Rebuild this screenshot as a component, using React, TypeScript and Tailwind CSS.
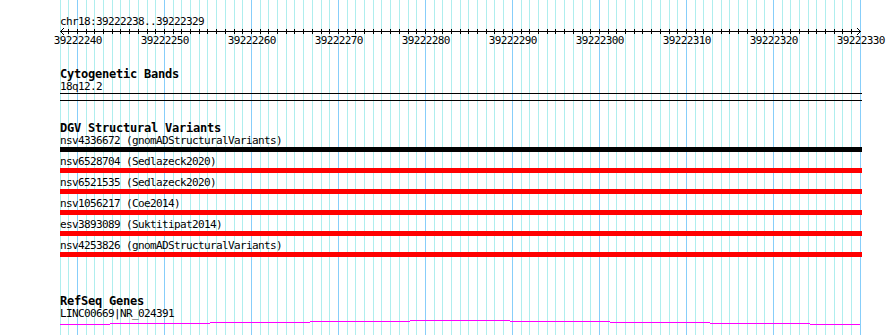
import React from 'react';

const START = 39222238;
const BP = 8.7;
const LEFT = 60;
const COUNT = 92;

const mono = "font-['DejaVu_Sans_Mono',monospace]";

const variants = [
    { name: 'nsv4336672 (gnomADStructuralVariants)', color: 'bg-black' },
    { name: 'nsv6528704 (Sedlazeck2020)', color: 'bg-[#ff0000]' },
    { name: 'nsv6521535 (Sedlazeck2020)', color: 'bg-[#ff0000]' },
    { name: 'nsv1056217 (Coe2014)', color: 'bg-[#ff0000]' },
    { name: 'esv3893089 (Suktitipat2014)', color: 'bg-[#ff0000]' },
    { name: 'nsv4253826 (gnomADStructuralVariants)', color: 'bg-[#ff0000]' },
];

const ticks = Array.from({ length: COUNT + 1 }, (_, k) => ({
    k,
    x: Math.floor(LEFT + k * BP) + 0.5,
    major: (START + k) % 10 === 0,
}));

const GridLines: React.FC = () => (
    <svg className="absolute inset-0" width={890} height={335}>
        {ticks.map(t => (
            <line key={t.k} x1={t.x} x2={t.x} y1={0} y2={335} stroke={t.major ? '#87cefa' : '#afeeee'} strokeWidth={1} />
        ))}
    </svg>
);

const Ruler: React.FC = () => (
    <svg width={890} height={18} className="block">
        <line x1={60} x2={861} y1={3.5} y2={3.5} stroke="#000" strokeWidth={1} />
        <path d="M64 0 L60.5 3.5 L64 7" fill="none" stroke="#000" strokeWidth={1} />
        <path d="M857 0 L860.5 3.5 L857 7" fill="none" stroke="#000" strokeWidth={1} />
        {ticks.filter(t => t.k > 0 && t.k < COUNT).map(t => (
            <line key={t.k} x1={t.x} x2={t.x} y1={1} y2={6} stroke="#000" strokeWidth={1} />
        ))}
        {ticks.filter(t => t.major).map(t => (
            <text
                key={t.k}
                x={LEFT + t.k * BP + 0.3}
                y={16}
                textAnchor="middle"
                fontFamily="'DejaVu Sans Mono', monospace"
                fontSize={11}
                letterSpacing={-0.62}
                fill="#000"
            >
                {START + t.k}
            </text>
        ))}
    </svg>
);

// gene model line steps up and back down in 100px pieces
const geneSegments = [
    [60, 110, 4], [110, 210, 3], [210, 310, 2], [310, 410, 1], [410, 510, 0],
    [510, 610, 1], [610, 710, 2], [710, 810, 3], [810, 860, 4],
];

const GeneLine: React.FC = () => (
    <svg width={890} height={6} className="block">
        {geneSegments.map(([a, b, y], i) => (
            <line key={i} x1={a} x2={b} y1={y + 0.5} y2={y + 0.5} stroke="#ff00ff" strokeWidth={1} />
        ))}
    </svg>
);

const App: React.FC = () => {
    return (
        <div className="relative w-[890px] h-[335px] overflow-hidden bg-white text-black">
            <GridLines />
            <div className="relative flex flex-col">
                <div className={`${mono} ml-[60px] mt-[16px] text-[11px] leading-[12px] tracking-[-0.62px]`}>
                    chr18:39222238..39222329
                </div>
                <Ruler />

                {/* Cytogenetic Bands */}
                <div className={`${mono} ml-[60px] mt-[23px] text-[12px] font-bold leading-[11px] tracking-[-0.22px]`}>
                    Cytogenetic Bands
                </div>
                <div className={`${mono} ml-[60px] text-[11px] leading-[13px] tracking-[-0.62px]`}>
                    18q12.2
                </div>
                <div className="ml-[60px] w-[802px] h-[8px] border-y border-black" />

                {/* DGV Structural Variants */}
                <div className={`${mono} ml-[60px] mt-[21px] text-[12px] font-bold leading-[12px] tracking-[-0.22px]`}>
                    DGV Structural Variants
                </div>
                <div className="flex flex-col gap-[3px]">
                    {variants.map(v => (
                        <div key={v.name} className="flex flex-col">
                            <div className={`${mono} ml-[60px] text-[11px] leading-[13px] tracking-[-0.62px]`}>
                                {v.name}
                            </div>
                            <div className={`ml-[60px] w-[802px] h-[5px] ${v.color}`} />
                        </div>
                    ))}
                </div>

                {/* RefSeq Genes */}
                <div className={`${mono} ml-[60px] mt-[39px] text-[12px] font-bold leading-[11px] tracking-[-0.22px]`}>
                    RefSeq Genes
                </div>
                <div className={`${mono} ml-[60px] text-[11px] leading-[13px] tracking-[-0.62px]`}>
                    LINC00669|NR_024391
                </div>
                <GeneLine />
            </div>
        </div>
    );
};

export default App;
